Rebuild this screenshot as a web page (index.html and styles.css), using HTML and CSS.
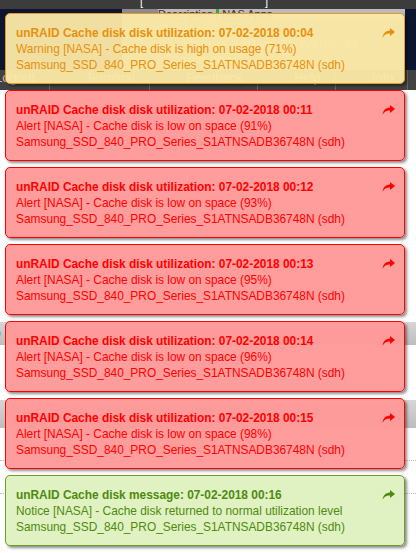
FILE: index.html
```html
<!DOCTYPE html>
<html lang="en">
<head>
	<meta charset="UTF-8">
	<title>unRAID notifications</title>
	<link rel="stylesheet" href="styles.css">
</head>
<body>
	<div class="page">
		<div class="header">
			<div class="topline"><span class="br">[</span><span class="br">]</span></div>
			<div class="banner">
				<div class="info">
					<div class="desc">Description <i></i> NAS Apps</div>
					<div class="uptime">Uptime 3 days, 39 hours, 39 minutes</div>
				</div>
			</div>
		</div>
		<div class="nav">
			<span class="first">Logout</span>
			<span>Terminal</span>
			<span>Feedback</span>
			<span>Help</span>
			<span>Info</span>
			<span>Log</span>
		</div>
		<div class="content">
			<div class="band one">o</div>
			<div class="band two"></div>
			<div class="rule"></div>
			<div class="rule"></div>
		</div>
	</div>

	<!-- notification stack -->
	<div class="growl">
		<div class="notice warning">
			<svg class="share" viewBox="0 0 13 10"><path d="M8 0 L13 4 L8 8 V5.6 C4.6 5.4 2.4 6.6 0.6 9.8 C0.9 5.4 3.4 2.7 8 2.4 Z"/></svg>
			<div class="head">unRAID Cache disk disk utilization: 07-02-2018 00:04</div>
			<div>Warning [NASA] - Cache disk is high on usage (71%)</div>
			<div>Samsung_SSD_840_PRO_Series_S1ATNSADB36748N (sdh)</div>
		</div>
		<div class="notice alert">
			<svg class="share" viewBox="0 0 13 10"><path d="M8 0 L13 4 L8 8 V5.6 C4.6 5.4 2.4 6.6 0.6 9.8 C0.9 5.4 3.4 2.7 8 2.4 Z"/></svg>
			<div class="head">unRAID Cache disk disk utilization: 07-02-2018 00:11</div>
			<div>Alert [NASA] - Cache disk is low on space (91%)</div>
			<div>Samsung_SSD_840_PRO_Series_S1ATNSADB36748N (sdh)</div>
		</div>
		<div class="notice alert">
			<svg class="share" viewBox="0 0 13 10"><path d="M8 0 L13 4 L8 8 V5.6 C4.6 5.4 2.4 6.6 0.6 9.8 C0.9 5.4 3.4 2.7 8 2.4 Z"/></svg>
			<div class="head">unRAID Cache disk disk utilization: 07-02-2018 00:12</div>
			<div>Alert [NASA] - Cache disk is low on space (93%)</div>
			<div>Samsung_SSD_840_PRO_Series_S1ATNSADB36748N (sdh)</div>
		</div>
		<div class="notice alert">
			<svg class="share" viewBox="0 0 13 10"><path d="M8 0 L13 4 L8 8 V5.6 C4.6 5.4 2.4 6.6 0.6 9.8 C0.9 5.4 3.4 2.7 8 2.4 Z"/></svg>
			<div class="head">unRAID Cache disk disk utilization: 07-02-2018 00:13</div>
			<div>Alert [NASA] - Cache disk is low on space (95%)</div>
			<div>Samsung_SSD_840_PRO_Series_S1ATNSADB36748N (sdh)</div>
		</div>
		<div class="notice alert">
			<svg class="share" viewBox="0 0 13 10"><path d="M8 0 L13 4 L8 8 V5.6 C4.6 5.4 2.4 6.6 0.6 9.8 C0.9 5.4 3.4 2.7 8 2.4 Z"/></svg>
			<div class="head">unRAID Cache disk disk utilization: 07-02-2018 00:14</div>
			<div>Alert [NASA] - Cache disk is low on space (96%)</div>
			<div>Samsung_SSD_840_PRO_Series_S1ATNSADB36748N (sdh)</div>
		</div>
		<div class="notice alert">
			<svg class="share" viewBox="0 0 13 10"><path d="M8 0 L13 4 L8 8 V5.6 C4.6 5.4 2.4 6.6 0.6 9.8 C0.9 5.4 3.4 2.7 8 2.4 Z"/></svg>
			<div class="head">unRAID Cache disk disk utilization: 07-02-2018 00:15</div>
			<div>Alert [NASA] - Cache disk is low on space (98%)</div>
			<div>Samsung_SSD_840_PRO_Series_S1ATNSADB36748N (sdh)</div>
		</div>
		<div class="notice normal">
			<svg class="share" viewBox="0 0 13 10"><path d="M8 0 L13 4 L8 8 V5.6 C4.6 5.4 2.4 6.6 0.6 9.8 C0.9 5.4 3.4 2.7 8 2.4 Z"/></svg>
			<div class="head">unRAID Cache disk message: 07-02-2018 00:16</div>
			<div>Notice [NASA] - Cache disk returned to normal utilization level</div>
			<div>Samsung_SSD_840_PRO_Series_S1ATNSADB36748N (sdh)</div>
		</div>
	</div>
</body>
</html>
```

FILE: styles.css
```css
*{padding:0;margin:0;box-sizing:border-box;}
body{
	font-family:"Liberation Sans", Arial, sans-serif;
	font-size:11.9px;
	background:#fff;
	overflow:hidden;
	height:553px;
	position:relative;
}

/* page behind the notifications */
.header{
	height:70px;
	background:#0c1630;
}
.topline{
	height:9px;
	background:#3c3c3c;
	display:flex;
	gap:122px;
	padding-left:140px;
	color:#fff;
	font-size:11px;
	line-height:5px;
	overflow:hidden;
}
.banner{
	height:61px;
	display:flex;
}
.info{
	margin-left:122px;
	width:283px;
	background:#8c8c8c;
	color:#eee;
	padding:0 0 0 36px;
}
.desc{
	color:#333;
	background:#bcbcbc;
	line-height:10px;
	height:10px;
	font-size:11px;
}
.desc i{
	display:inline-block;
	width:3px;
	height:9px;
	background:#3a3;
}
.uptime{
	margin-top:17px;
	font-size:14px;
	padding-left:25px;
}
.nav{
	height:20px;
	background:#424242;
	color:#bbb;
	display:flex;
	gap:36px;
	line-height:15px;
	font-size:13px;
	overflow:hidden;
}
.nav span{
	border-right:1px solid #666;
	padding-right:14px;
}
.nav .first{margin-left:-5px;}
.content{
	padding-top:232px;
}
.band{
	background:linear-gradient(#d6d6d6,#bdbdbd);
	height:23px;
	line-height:23px;
	color:#333;
	margin-left:-6px;
}
.band.two{margin-top:55px;height:28px;}
.rule{
	border-top:1px dotted #bbb;
	margin-top:32px;
}

/* notification stack */
.growl{
	position:absolute;
	top:13px;
	left:5px;
	width:400px;
	display:flex;
	flex-direction:column;
	gap:6px;
}
.notice{
	position:relative;
	height:71px;
	border:1px solid;
	border-radius:5px;
	padding:10.5px 10px 0 10px;
	line-height:16px;
	box-shadow:2px 2px 3px rgba(0,0,0,.45);
}
.notice .head{
	font-weight:bold;
}
.share{
	position:absolute;
	right:9px;
	top:14px;
	width:13px;
	height:10px;
}
.warning{
	background:rgba(251,232,166,.96);
	border-color:#e49b2e;
	color:#e8900e;
}
.warning .share{fill:#e8900e;}
.alert{
	background:rgba(255,152,152,.96);
	border-color:#f00;
	color:#f00;
}
.alert .share{fill:#f00;}
.normal{
	background:rgba(223,242,192,.97);
	border-color:#6c9d2c;
	color:#4f8a10;
}
.normal .share{fill:#4f8a10;}
```
